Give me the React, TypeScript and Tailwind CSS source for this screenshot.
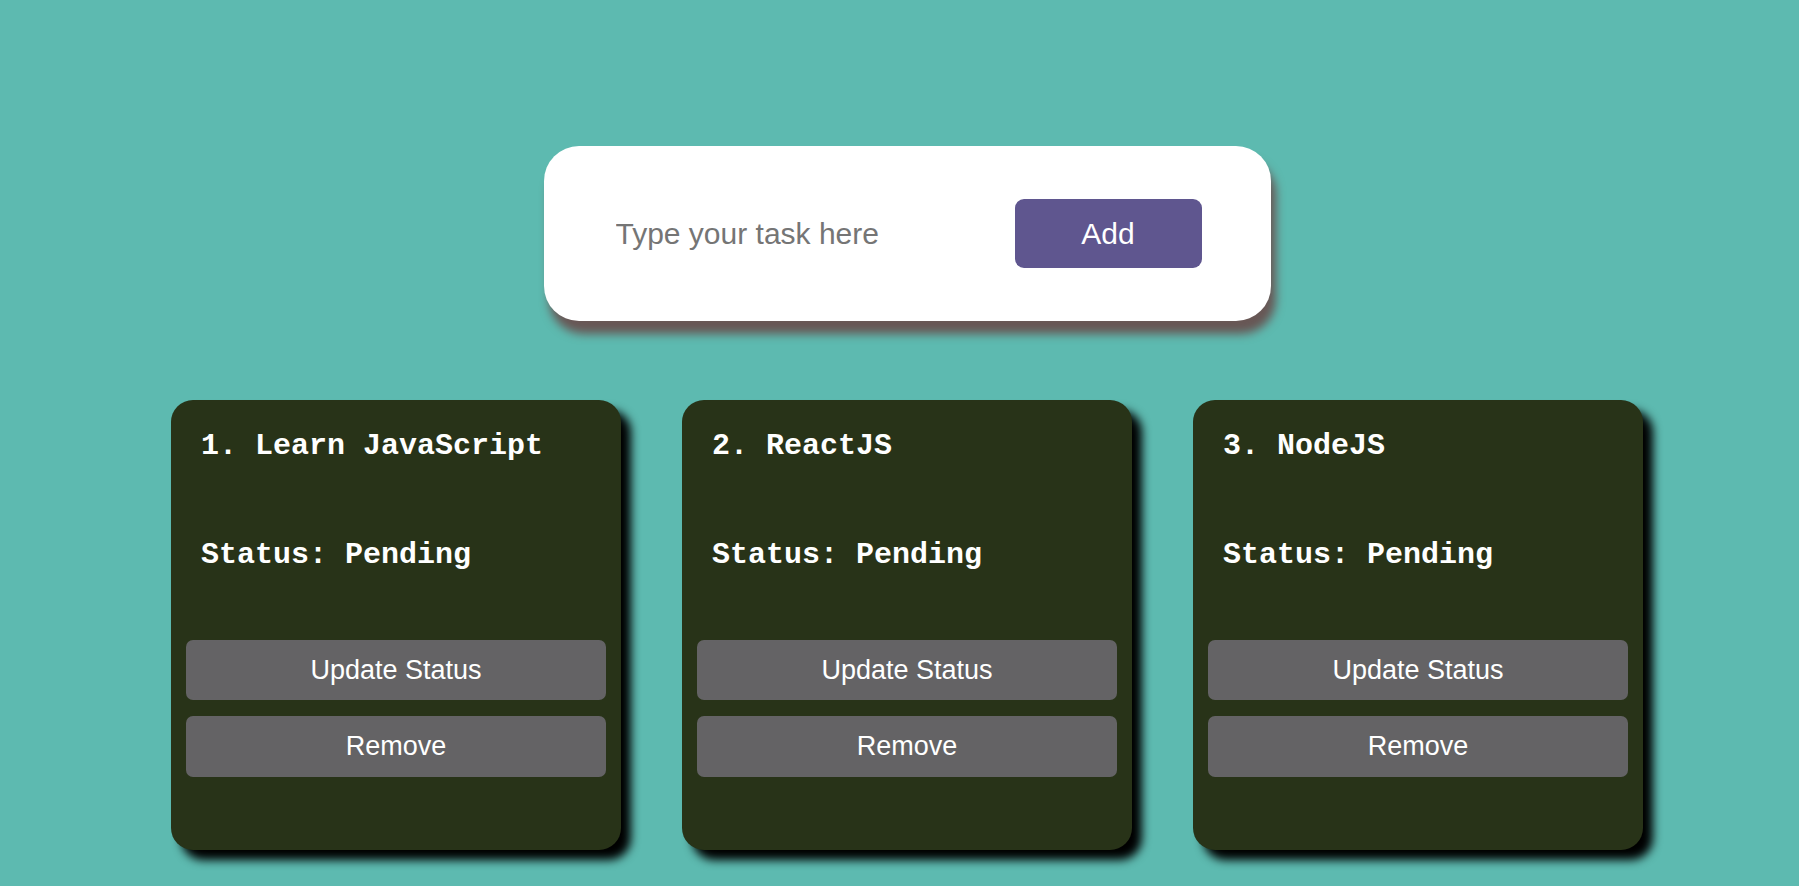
import { useState } from 'react';

type Task = { id: number; name: string; status: string };

const initialTasks: Task[] = [
  { id: 1, name: 'Learn JavaScript', status: 'Pending' },
  { id: 2, name: 'ReactJS', status: 'Pending' },
  { id: 3, name: 'NodeJS', status: 'Pending' },
];

function TaskCard({ task, index, onUpdate, onRemove }: { task: Task; index: number; onUpdate: () => void; onRemove: () => void }) {
  return (
    <div className="w-[450px] h-[450px] rounded-[22px] bg-[#283318] px-[15px] shadow-[10px_10px_10px_#000] flex flex-col">
      <div className="mt-[29px] pl-[15px] text-[30px] leading-[34px] font-bold text-white font-['Liberation_Mono','Courier_New',monospace]">
        {index + 1}. {task.name}
      </div>
      <div className="mt-[75px] pl-[15px] text-[30px] leading-[34px] font-bold text-white font-['Liberation_Mono','Courier_New',monospace]">
        Status: {task.status}
      </div>
      <div className="mt-[68px] flex flex-col gap-[16px]">
        <button
          onClick={onUpdate}
          className="h-[60px] w-full rounded-[7px] bg-[#646365] text-white text-[27px] font-['Liberation_Sans',Arial,sans-serif]"
        >
          Update Status
        </button>
        <button
          onClick={onRemove}
          className="h-[61px] w-full rounded-[7px] bg-[#646365] text-white text-[27px] font-['Liberation_Sans',Arial,sans-serif]"
        >
          Remove
        </button>
      </div>
    </div>
  );
}

export default function App() {
  const [tasks, setTasks] = useState<Task[]>(initialTasks);
  const [text, setText] = useState('');

  const addTask = () => {
    if (!text.trim()) return;
    setTasks([...tasks, { id: Date.now(), name: text.trim(), status: 'Pending' }]);
    setText('');
  };

  return (
    <div className="min-h-screen bg-[#5dbab0] pt-[146px] pb-[40px] pl-[15px] flex flex-col items-center">
      <div className="w-[727px] h-[175px] rounded-[35px] bg-white shadow-[5px_13px_10px_#685755] flex items-center justify-between pl-[72px] pr-[69px]">
        <input
          value={text}
          onChange={(e) => setText(e.target.value)}
          placeholder="Type your task here"
          className="w-[360px] outline-none text-[30px] text-gray-700 placeholder:text-[#757575] font-['Liberation_Sans',Arial,sans-serif]"
        />
        <button
          onClick={addTask}
          className="w-[187px] h-[69px] rounded-[9px] bg-[#5f568f] text-white text-[30px] font-['Liberation_Sans',Arial,sans-serif]"
        >
          Add
        </button>
      </div>

      <div className="mt-[79px] flex gap-[61px]">
        {tasks.map((t, i) => (
          <TaskCard
            key={t.id}
            task={t}
            index={i}
            onUpdate={() =>
              setTasks(tasks.map((x) => (x.id === t.id ? { ...x, status: x.status === 'Pending' ? 'Done' : 'Pending' } : x)))
            }
            onRemove={() => setTasks(tasks.filter((x) => x.id !== t.id))}
          />
        ))}
      </div>
    </div>
  );
}
